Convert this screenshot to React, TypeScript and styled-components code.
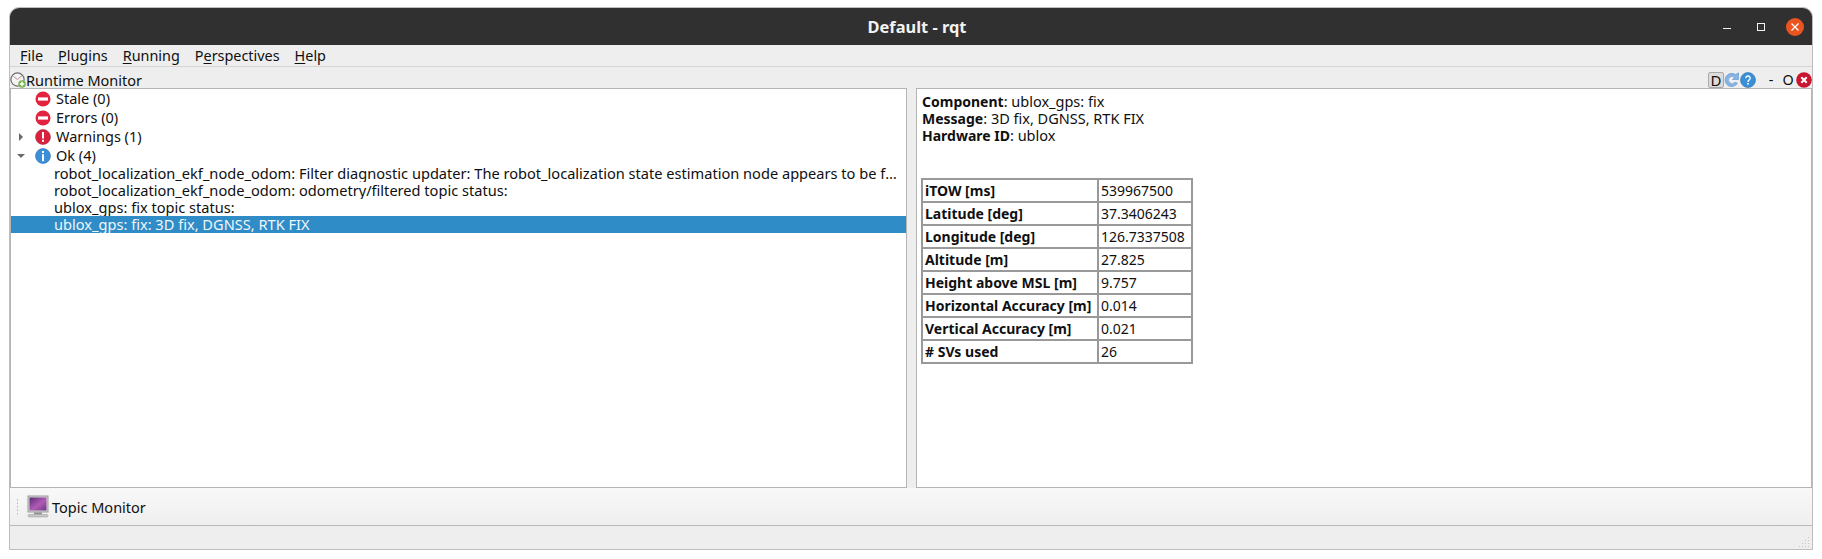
import React, { FC } from 'react';
import styled, { createGlobalStyle } from 'styled-components';

const GlobalStyle = createGlobalStyle`
    html, body {
        margin: 0;
        padding: 0;
        background: #ffffff;
    }
    body {
        font-family: "Noto Sans", "Open Sans", sans-serif;
        font-size: 14.5px;
        color: #101010;
    }
`;

const Window = styled.div`
    width: 1804px;
    height: 543px;
    margin: 7px 0 0 9px;
    display: flex;
    flex-direction: column;
    background: #eeeeee;
    border: 1px solid #bdbdbd;
    box-sizing: border-box;
    border-radius: 10px 10px 0 0;
`;

const TitleBar = styled.div`
    height: 37px;
    flex: none;
    display: grid;
    grid-template-columns: 1fr auto 1fr;
    align-items: center;
    padding-left: 12px;
    background: #303030;
    border-radius: 9px 9px 0 0;
`;

const WindowTitle = styled.div`
    color: #f2f2f2;
    font-size: 16.4px;
    font-weight: 700;
`;

const WindowControls = styled.div`
    grid-column: 3;
    justify-self: end;
    display: flex;
    align-items: center;
    padding-right: 8px;
`;

const WindowButton = styled.div`
    width: 18px;
    height: 18px;
    margin-right: 16px;
    display: flex;
    align-items: center;
    justify-content: center;

    &:last-child {
        margin-right: 0;
    }
`;

const MenuBar = styled.div`
    height: 21px;
    flex: none;
    display: flex;
    align-items: center;
    gap: 15px;
    padding: 0 10px;
    font-size: 14.4px;
    border-bottom: 1px solid #d4d4d4;
`;

const MenuItem = styled.span`
    white-space: pre;

    u {
        text-underline-offset: 2px;
    }
`;

const DockTitle = styled.div`
    height: 21px;
    flex: none;
    display: flex;
    align-items: center;
    padding-top: 5px;
    box-sizing: border-box;
`;

const DockLabel = styled.span`
    flex: 1;
    line-height: 16px;
`;

const DockButtons = styled.div`
    display: flex;
    align-items: center;
`;

const DockLetter = styled.span<{ framed?: boolean }>`
    width: ${(props) => (props.framed ? '16px' : '12px')};
    height: 16px;
    margin: ${(props) => (props.framed ? '0' : '0 2px 0 3px')};
    display: flex;
    align-items: center;
    justify-content: center;
    font-size: ${(props) => (props.framed ? '15px' : '14.4px')};
    line-height: 1;
    box-sizing: border-box;
    background: ${(props) => (props.framed ? '#dcdcdc' : 'transparent')};
    border: ${(props) => (props.framed ? '1px solid #a9a9a9' : 'none')};
    border-radius: 2px;
`;

const DockSpacer = styled.span`
    width: 6px;
`;

const Panels = styled.div`
    height: 400px;
    flex: none;
    display: flex;
    gap: 9px;
`;

const Panel = styled.div<{ wide?: boolean }>`
    width: ${(props) => (props.wide ? '896px' : '897px')};
    flex: none;
    box-sizing: border-box;
    background: #ffffff;
    border: 1px solid #b4b4b4;
    overflow: hidden;
`;

const GroupRow = styled.div`
    height: 19px;
    display: flex;
    align-items: center;
`;

const GroupLabel = styled.span`
    margin-top: -2px;
`;

const Arrow = styled.span`
    width: 24px;
    flex: none;
    display: flex;
    justify-content: center;
    box-sizing: border-box;
    padding-right: 4px;
`;

const StatusIconSlot = styled.span`
    width: 16px;
    height: 16px;
    flex: none;
    margin-right: 5px;
`;

const ChildRow = styled.div<{ selected?: boolean }>`
    height: 17px;
    line-height: 17px;
    padding-left: 43px;
    padding-right: 2px;
    font-size: 14.6px;
    white-space: nowrap;
    overflow: hidden;
    text-overflow: ellipsis;
    color: ${(props) => (props.selected ? '#eef6fb' : '#101010')};
    background: ${(props) => (props.selected ? '#308cc6' : 'transparent')};
`;

const Details = styled.div`
    padding: 4px 0 0 5px;
    line-height: 17px;
`;

const Fact = styled.div`
    b {
        font-size: 14px;
        font-weight: 700;
    }
`;

const DataTable = styled.table`
    margin: 34px 0 0 -1px;
    border-collapse: collapse;
    font-size: 14px;
    line-height: 17px;
    border: 2px solid #999999;

    th, td {
        height: 23px;
        padding: 0 2px;
        box-sizing: border-box;
        border: 2px solid #999999;
        text-align: left;
        white-space: nowrap;
    }

    th {
        width: 176px;
        font-weight: 700;
    }

    td {
        width: 94px;
    }
`;

const ToolBar = styled.div`
    height: 38px;
    flex: none;
    display: flex;
    align-items: center;
    padding-left: 5px;
    gap: 3px;
    background: linear-gradient(#f8f8f8, #efefef);
    border-bottom: 1px solid #b8b8b8;
    box-sizing: border-box;
`;

const Grip = styled.div`
    width: 5px;
    height: 18px;
    margin-right: 4px;
    background-image: radial-gradient(#bdbdbd 0.8px, transparent 1px);
    background-size: 5px 3.5px;
`;

const StatusBar = styled.div`
    height: 23px;
    flex: none;
    box-sizing: border-box;
    display: flex;
    justify-content: flex-end;
    align-items: flex-end;
    padding: 0 2px 1px 0;
`;

const MinimizeIcon: FC = () => (
    <svg width="10" height="10" viewBox="0 0 10 10">
        <rect x="1" y="6" width="8" height="1" fill="#f2f2f2" />
    </svg>
);

const MaximizeIcon: FC = () => (
    <svg width="10" height="10" viewBox="0 0 10 10">
        <rect x="1.5" y="1.5" width="7" height="7" fill="none" stroke="#f2f2f2" />
    </svg>
);

const CloseIcon: FC = () => (
    <svg width="18" height="18" viewBox="0 0 18 18">
        <circle cx="9" cy="9" r="9" fill="#e95420" />
        <path d="M5.5 5.5 12.5 12.5M12.5 5.5 5.5 12.5" stroke="#fff" strokeWidth="1.3" />
    </svg>
);

const StopIcon: FC = () => (
    <svg width="16" height="16" viewBox="0 0 16 16">
        <circle cx="8" cy="8" r="7.5" fill="#e3223f" />
        <rect x="3" y="6.4" width="10" height="3.2" fill="#fff" />
    </svg>
);

const WarningIcon: FC = () => (
    <svg width="16" height="16" viewBox="0 0 16 16">
        <circle cx="8" cy="8" r="7.5" fill="#d9213e" stroke="#a8324a" strokeWidth="0.6" />
        <rect x="7" y="3" width="2" height="6.5" fill="#fff" />
        <rect x="7" y="10.8" width="2" height="2" fill="#fff" />
    </svg>
);

const InfoIcon: FC = () => (
    <svg width="16" height="16" viewBox="0 0 16 16">
        <circle cx="8" cy="8" r="7.5" fill="#3a8fd6" stroke="#2f72ad" strokeWidth="0.6" />
        <rect x="7" y="3" width="2" height="2" fill="#fff" />
        <rect x="7" y="6.2" width="2" height="7" fill="#fff" />
    </svg>
);

const ArrowRight: FC = () => (
    <svg width="6" height="8" viewBox="0 0 6 8">
        <path d="M1 0 5 4 1 8Z" fill="#6a6a6a" />
    </svg>
);

const ArrowDown: FC = () => (
    <svg width="8" height="6" viewBox="0 0 8 6">
        <path d="M0 1H8L4 5Z" fill="#6a6a6a" />
    </svg>
);

const RuntimeIcon: FC = () => (
    <svg width="16" height="16" viewBox="0 0 16 16" style={{ flex: 'none' }}>
        <circle cx="7.5" cy="7.5" r="6.6" fill="#f4f4f4" stroke="#6d6d6d" strokeWidth="1.2" />
        <path d="M7.5 7.5 3.5 4.5M7.5 7.5 12 3.5" stroke="#b98080" strokeWidth="0.9" />
        <circle cx="12" cy="12" r="3.8" fill="#79b34f" />
        <path d="M12 9.8v4.4M9.8 12h4.4" stroke="#fff" strokeWidth="1.5" />
    </svg>
);

const ReloadIcon: FC = () => (
    <svg width="16" height="16" viewBox="0 0 16 16">
        <path
            d="M13.5 11A6.6 6.6 0 1 1 11.5 2.6L14.5 .8V7.5H8.5L10.6 5.5A3.6 3.6 0 1 0 10.8 10.4Z"
            fill="#86b4e4"
            stroke="#5d92cc"
            strokeWidth="0.6"
        />
    </svg>
);

const HelpIcon: FC = () => (
    <svg width="16" height="16" viewBox="0 0 16 16">
        <circle cx="8" cy="8" r="7.5" fill="#3a8fd6" stroke="#2f72ad" strokeWidth="0.6" />
        <path d="M5.8 6.2A2.2 2.2 0 1 1 9 8.2C8.3 8.6 8 9 8 10" fill="none" stroke="#fff" strokeWidth="1.4" />
        <rect x="7.2" y="11" width="1.6" height="1.6" fill="#fff" />
    </svg>
);

const DockCloseIcon: FC = () => (
    <svg width="16" height="16" viewBox="0 0 16 16">
        <circle cx="8" cy="8" r="7.8" fill="#c9152f" />
        <path d="M5.3 5.3 10.7 10.7M10.7 5.3 5.3 10.7" stroke="#fff" strokeWidth="2" />
    </svg>
);

const MonitorIcon: FC = () => (
    <svg width="22" height="23" viewBox="0 0 22 23" style={{ flex: 'none' }}>
        <defs>
            <linearGradient id="screen" x1="0" y1="0" x2="1" y2="1">
                <stop offset="0" stopColor="#5d2a78" />
                <stop offset="0.55" stopColor="#b05bb5" />
                <stop offset="1" stopColor="#6c3a86" />
            </linearGradient>
        </defs>
        <rect x="1" y="1" width="20" height="16" fill="#d4d4d4" stroke="#9a9a9a" />
        <rect x="2.5" y="2.5" width="17" height="13" fill="url(#screen)" />
        <rect x="7" y="17.5" width="8" height="2" fill="#8f8f8f" />
        <rect x="1" y="19.5" width="20" height="2.5" rx="1" fill="#c6c6c6" stroke="#9a9a9a" strokeWidth="0.5" />
    </svg>
);

const ResizeGrip: FC = () => (
    <svg width="12" height="12" viewBox="0 0 12 12">
        <g fill="#c4c4c4">
            <rect x="10" y="1" width="1" height="1" />
            <rect x="7" y="4" width="1" height="1" />
            <rect x="10" y="4" width="1" height="1" />
            <rect x="4" y="7" width="1" height="1" />
            <rect x="7" y="7" width="1" height="1" />
            <rect x="10" y="7" width="1" height="1" />
            <rect x="1" y="10" width="1" height="1" />
            <rect x="4" y="10" width="1" height="1" />
            <rect x="7" y="10" width="1" height="1" />
            <rect x="10" y="10" width="1" height="1" />
        </g>
    </svg>
);

const MENU: [string, string, string][] = [
    ['', 'F', 'ile'],
    ['', 'P', 'lugins'],
    ['', 'R', 'unning'],
    ['P', 'e', 'rspectives'],
    ['', 'H', 'elp'],
];

const GROUPS = [
    { label: 'Stale (0)', icon: <StopIcon /> },
    { label: 'Errors (0)', icon: <StopIcon /> },
    { label: 'Warnings (1)', icon: <WarningIcon />, arrow: <ArrowRight /> },
    { label: 'Ok (4)', icon: <InfoIcon />, arrow: <ArrowDown /> },
];

const CHILDREN = [
    'robot_localization_ekf_node_odom: Filter diagnostic updater: The robot_localization state estimation node appears to be functioning properly.',
    'robot_localization_ekf_node_odom: odometry/filtered topic status:',
    'ublox_gps: fix topic status:',
    'ublox_gps: fix: 3D fix, DGNSS, RTK FIX',
];

const FACTS = [
    ['Component', 'ublox_gps: fix'],
    ['Message', '3D fix, DGNSS, RTK FIX'],
    ['Hardware ID', 'ublox'],
];

const VALUES = [
    ['iTOW [ms]', '539967500'],
    ['Latitude [deg]', '37.3406243'],
    ['Longitude [deg]', '126.7337508'],
    ['Altitude [m]', '27.825'],
    ['Height above MSL [m]', '9.757'],
    ['Horizontal Accuracy [m]', '0.014'],
    ['Vertical Accuracy [m]', '0.021'],
    ['# SVs used', '26'],
];

const App: FC = () => {
    return (
        <Window>
            <GlobalStyle />
            <TitleBar>
                <span />
                <WindowTitle>Default - rqt</WindowTitle>
                <WindowControls>
                    <WindowButton><MinimizeIcon /></WindowButton>
                    <WindowButton><MaximizeIcon /></WindowButton>
                    <WindowButton><CloseIcon /></WindowButton>
                </WindowControls>
            </TitleBar>
            <MenuBar>
                {MENU.map(([before, key, after]) => (
                    <MenuItem key={before + key + after}>
                        {before}<u>{key}</u>{after}
                    </MenuItem>
                ))}
            </MenuBar>
            <DockTitle>
                <RuntimeIcon />
                <DockLabel>Runtime Monitor</DockLabel>
                <DockButtons>
                    <DockLetter framed>D</DockLetter>
                    <ReloadIcon />
                    <HelpIcon />
                    <DockSpacer />
                    <DockLetter>-</DockLetter>
                    <DockLetter>O</DockLetter>
                    <DockCloseIcon />
                </DockButtons>
            </DockTitle>
            <Panels>
                <Panel>
                    {GROUPS.map((group) => (
                        <GroupRow key={group.label}>
                            <Arrow>{group.arrow}</Arrow>
                            <StatusIconSlot>{group.icon}</StatusIconSlot>
                            <GroupLabel>{group.label}</GroupLabel>
                        </GroupRow>
                    ))}
                    {CHILDREN.map((text, index) => (
                        <ChildRow key={text} selected={index === CHILDREN.length - 1}>
                            {text}
                        </ChildRow>
                    ))}
                </Panel>
                <Panel wide>
                    <Details>
                        {FACTS.map(([name, value]) => (
                            <Fact key={name}>
                                <b>{name}</b>: {value}
                            </Fact>
                        ))}
                        <DataTable>
                            <tbody>
                                {VALUES.map(([name, value]) => (
                                    <tr key={name}>
                                        <th>{name}</th>
                                        <td>{value}</td>
                                    </tr>
                                ))}
                            </tbody>
                        </DataTable>
                    </Details>
                </Panel>
            </Panels>
            <ToolBar>
                <Grip />
                <MonitorIcon />
                Topic Monitor
            </ToolBar>
            <StatusBar>
                <ResizeGrip />
            </StatusBar>
        </Window>
    );
};

export default App;
